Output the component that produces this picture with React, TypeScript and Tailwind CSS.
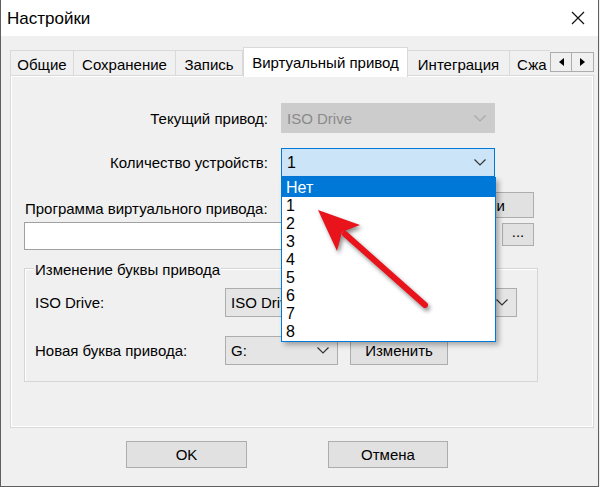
import React from "react";

function Chevron({ color = "#333" }: { color?: string }) {
  return (
    <svg width="12" height="7" viewBox="0 0 12 7" className="shrink-0">
      <polyline points="0.5,0.5 6,6 11.5,0.5" fill="none" stroke={color} strokeWidth="1.2" />
    </svg>
  );
}

function Combo({
  text,
  className,
  textClass = "text-black",
  chevron = "#333",
}: {
  text: string;
  className: string;
  textClass?: string;
  chevron?: string;
}) {
  return (
    <div className={`flex items-center justify-between pl-[5px] pr-[8px] border ${className}`}>
      <span className={textClass}>{text}</span>
      <Chevron color={chevron} />
    </div>
  );
}

export default function App() {
  const items = ["1", "2", "3", "4", "5", "6", "7", "8"];
  return (
    <div className="w-[600px] h-[487px] bg-[#f0f0f0] relative overflow-hidden font-['Liberation_Sans',sans-serif] text-[15px] text-black leading-none">
      <div className="w-[599px] h-[487px] border-l border-r border-b border-[#5f5f5f] flex flex-col">
        {/* title bar */}
        <div className="h-[36px] bg-white flex items-center justify-between pl-[6px] pr-[13px] shrink-0">
          <span className="text-[17px]">Настройки</span>
          <svg width="14" height="14" viewBox="0 0 14 14">
            <path d="M1 1 L13 13 M13 1 L1 13" stroke="#111" strokeWidth="1.2" />
          </svg>
        </div>

        {/* tabs */}
        <div className="mt-[11px] h-[28px] flex items-end pl-[9px] shrink-0">
          <div className="w-[64px] h-[25px] border border-b-0 border-[#d9d9d9] flex items-center justify-center pt-[2px]">Общие</div>
          <div className="w-[102px] h-[25px] border border-b-0 border-l-0 border-[#d9d9d9] flex items-center justify-center pt-[2px]">Сохранение</div>
          <div className="w-[67px] h-[25px] border border-b-0 border-l-0 border-[#d9d9d9] flex items-center justify-center pt-[2px]">Запись</div>
          <div className="w-[165px] h-[30px] -mb-[2px] relative z-10 bg-white border border-b-0 border-[#d9d9d9] flex items-center justify-center pb-[1px]">Виртуальный привод</div>
          <div className="w-[102px] h-[25px] border border-b-0 border-l-0 border-[#d9d9d9] flex items-center justify-center pt-[2px]">Интеграция</div>
          <div className="w-[40px] h-[25px] border-t border-[#d9d9d9] flex items-center pl-[7px] pt-[2px] whitespace-nowrap">Сжа</div>
          <div className="mb-[3px] h-[20px] w-[44px] flex">
            <div className="w-[22px] h-[20px] border border-[#adadad] bg-[#f0f0f0] flex items-center justify-center">
              <svg width="5" height="8" viewBox="0 0 5 8"><polygon points="5,0 5,8 0,4" fill="#000" /></svg>
            </div>
            <div className="w-[22px] h-[20px] border border-l-0 border-[#adadad] bg-[#f0f0f0] flex items-center justify-center">
              <svg width="5" height="8" viewBox="0 0 5 8"><polygon points="0,0 0,8 5,4" fill="#000" /></svg>
            </div>
          </div>
        </div>

        {/* panel */}
        <div className="ml-[9px] w-[584px] h-[353px] border border-[#d9d9d9] shadow-[inset_0_0_0_1px_#ffffff] flex flex-col shrink-0">
          <div className="mt-[27px] flex items-center h-[30px]">
            <div className="w-[257px] text-right">Текущий привод:</div>
            <Combo
              text="ISO Drive"
              className="ml-[13px] w-[214px] h-[30px] bg-[#cccccc] border-[#cccccc]"
              textClass="text-[#8a8a8a]"
              chevron="#a8a8a8"
            />
          </div>
          <div className="mt-[15px] flex items-center h-[29px]">
            <div className="w-[257px] text-right">Количество устройств:</div>
            <Combo text="1" className="ml-[13px] w-[214px] h-[29px] bg-[#cce4f7] border-[#0078d7] text-[16px]" />
          </div>
          <div className="mt-[15px] flex items-center justify-between h-[26px] pl-[14px] pr-[59px]">
            <span className="mt-[6px]">Программа виртуального привода:</span>
            <div className="w-[96px] h-[26px] border border-[#adadad] bg-[#e1e1e1] flex items-center justify-end pr-[28px]">Опции</div>
          </div>
          <div className="mt-[4px] flex items-start pl-[13px]">
            <div className="w-[471px] h-[28px] bg-white border border-[#a0a0a0]" />
            <div className="ml-[7px] mt-[1px] w-[32px] h-[23px] border border-[#adadad] bg-[#e1e1e1] flex items-end justify-center pb-[6px] leading-none">...</div>
          </div>

          {/* group box */}
          <div className="mt-[18px] ml-[13px] w-[514px] h-[114px] relative border border-[#d5d5d5] shadow-[inset_1px_1px_0_#ffffff] flex flex-col">
            <span className="absolute left-[9px] -top-[7px] px-[1px] bg-[#f0f0f0] leading-[16px]">Изменение буквы привода</span>
            <div className="mt-[19px] flex items-center h-[29px]">
              <div className="w-[200px] pl-[10px]">ISO Drive:</div>
              <Combo text="ISO Drive" className="w-[292px] h-[29px] bg-[#e5e5e5] border-[#adadad]" />
            </div>
            <div className="mt-[19px] flex items-center h-[29px]">
              <div className="w-[200px] pl-[10px]">Новая буква привода:</div>
              <Combo text="G:" className="w-[113px] h-[29px] bg-[#e5e5e5] border-[#adadad]" />
              <div className="ml-[12px] w-[98px] h-[29px] border border-[#adadad] bg-[#e1e1e1] flex items-center justify-center">Изменить</div>
            </div>
          </div>
        </div>

        {/* bottom buttons */}
        <div className="mt-[13px] flex pl-[125px] gap-[81px]">
          <div className="w-[121px] h-[27px] border border-[#adadad] bg-[#e1e1e1] flex items-center justify-center">OK</div>
          <div className="w-[120px] h-[27px] border border-[#adadad] bg-[#e1e1e1] flex items-center justify-center">Отмена</div>
        </div>
      </div>

      {/* open dropdown list */}
      <div className="absolute left-[281px] top-[177px] w-[215px] h-[165px] bg-white border border-[#0078d7] shadow-[3px_3px_5px_rgba(0,0,0,0.3)] flex flex-col text-[16px]">
        <div className="h-[19px] bg-[#0078d7] text-white flex items-center pl-[4px]">Нет</div>
        {items.map((t) => (
          <div key={t} className="h-[18px] flex items-center pl-[4px]">
            {t}
          </div>
        ))}
      </div>

      {/* red arrow */}
      <svg
        className="absolute left-0 top-0 pointer-events-none drop-shadow-[2px_3px_2px_rgba(0,0,0,0.45)]"
        width="600"
        height="487"
        viewBox="0 0 600 487"
      >
        <line x1="425" y1="305" x2="345" y2="234" stroke="#e8131b" strokeWidth="6" strokeLinecap="round" />
        <polygon points="318,210 337,251 342,232 360,225" fill="#e8131b" />
      </svg>
    </div>
  );
}
